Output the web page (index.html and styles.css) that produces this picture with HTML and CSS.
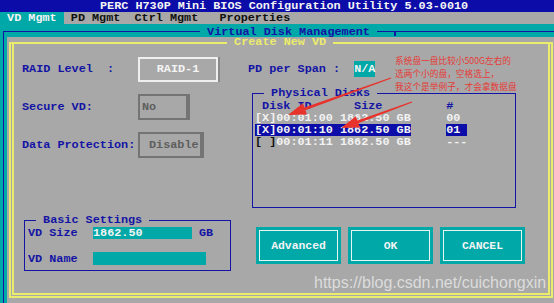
FILE: index.html
```html
<!DOCTYPE html>
<html>
<head>
  <link rel="stylesheet" href="styles.css">
</head>
<body>
  <div class="titlebar">PERC H730P Mini BIOS Configuration Utility 5.03-0010</div>

  <div class="tabs">
    <span class="tab active">VD Mgmt</span>
    <span class="tab">PD Mgmt</span>
    <span class="tab">Ctrl Mgmt</span>
    <span class="tab last">Properties</span>
  </div>

  <div class="main">
    <div class="frame">
      <span class="frame-title">Virtual Disk Management</span>
      <div class="dialog">
        <div class="outer">
          <span class="dialog-title">Create New VD</span>
          <div class="inner">

            <div class="top">
              <div class="options">
                <div class="opt-row">
                  <span class="label">RAID Level  :</span>
                  <span class="box box-raid">RAID-1</span>
                </div>
                <div class="opt-row">
                  <span class="label">Secure VD:</span>
                  <span class="box box-off box-no">No</span>
                </div>
                <div class="opt-row">
                  <span class="label">Data Protection:</span>
                  <span class="box box-off box-dis">Disable</span>
                </div>
              </div>

              <div class="disks-col">
                <div class="span-row">
                  <span class="label">PD per Span :  </span><span class="na">N/A</span>
                </div>
                <fieldset class="group disks">
                  <legend>Physical Disks</legend>
                  <div class="disk-row head">
                    <span class="h-id">Disk ID</span><span class="h-size">Size</span><span class="h-num">#</span>
                  </div>
                  <div class="disk-row">
                    <span class="id">[X]00:01:00 1862.50 GB</span><span class="num">00</span>
                  </div>
                  <div class="disk-row selected">
                    <span class="id">[X]00:01:10 1862.50 GB</span><span class="num">01</span>
                  </div>
                  <div class="disk-row">
                    <span class="id"><span class="mark">[ ]</span>00:01:11 1862.50 GB</span><span class="num">---</span>
                  </div>
                </fieldset>
              </div>
            </div>

            <div class="bottom">
              <fieldset class="group basic">
                <legend>Basic Settings</legend>
                <div class="set-row">
                  <span class="set-label">VD Size</span>
                  <span class="input input-size">1862.50</span>
                  <span class="unit">GB</span>
                </div>
                <div class="set-row">
                  <span class="set-label">VD Name</span>
                  <span class="input input-name"></span>
                </div>
              </fieldset>

              <div class="actions">
                <div class="btn"><span>Advanced</span></div>
                <div class="btn"><span>OK</span></div>
                <div class="btn"><span>CANCEL</span></div>
              </div>
            </div>

          </div>
        </div>
      </div>
    </div>
  </div>

  <div class="note">
    系统盘一盘比较小500G左右的<br>
    选两个小的盘，空格选上，<br>
    我这个是举例子，才会拿数据盘
  </div>

  <svg class="arrows" width="554" height="303" viewBox="0 0 554 303">
    <polygon points="390.8,77.5 304.4,107.5 302.9,103.3 288,115 306.9,114.6 305.4,110.3 391.2,78.5"/>
    <polygon points="411.8,101.5 357.4,120.4 355.8,116.2 341,128 360,127.4 358.4,123.2 412.2,102.5"/>
  </svg>

  <div class="watermark">https://blog.csdn.net/cuichongxin</div>
</body>
</html>
```

FILE: styles.css
```css
* {
  margin: 0;
  padding: 0;
  box-sizing: border-box;
}

body {
  width: 554px;
  height: 303px;
  overflow: hidden;
  position: relative;
  display: flex;
  flex-direction: column;
  background: #00a8a8;
  font-family: "Liberation Mono", "DejaVu Sans Mono", monospace;
  font-size: 11.8px;
  font-weight: bold;
  line-height: 12px;
  color: #1414a4;
}

.titlebar {
  height: 12px;
  line-height: 12px;
  padding-left: 100px;
  background: #0c0ca8;
  color: #f4f4f4;
  white-space: pre;
}

.tabs {
  height: 12px;
  display: flex;
  background: #a8a8a8;
  color: #101010;
}

.tab {
  padding: 0 1ch;
}

.tab.active {
  background: #00a8a8;
  color: #f4f4f4;
}

.tab.last {
  margin-left: 1ch;
}

.main {
  flex: 1;
  display: flex;
  flex-direction: column;
  padding: 7px 0 0 3px;
}

.frame {
  flex: 1;
  display: flex;
  flex-direction: column;
  position: relative;
  border-top: 1px solid #1414a4;
  border-left: 1px solid #1414a4;
  padding: 5px 0 0 3px;
}

.frame::after {
  content: '';
  position: absolute;
  left: 390px;
  top: 0;
  width: 2px;
  height: 4px;
  background: #1414a4;
}

.frame-title {
  position: absolute;
  left: 196px;
  top: -5px;
  line-height: 10px;
  padding: 0 1ch;
  background: #00a8a8;
  white-space: pre;
}

.dialog {
  flex: 1;
  display: flex;
  flex-direction: column;
  background: #a8a8a8;
  padding: 5px 1px 5px 2px;
}

.outer {
  flex: 1;
  display: flex;
  flex-direction: column;
  position: relative;
  border: 2px solid #ecec6c;
  padding: 0 1px 1px 1px;
}

.dialog-title {
  position: absolute;
  left: 216px;
  top: -7px;
  line-height: 10px;
  padding: 0 1ch;
  background: #a8a8a8;
  color: #ecec6c;
}

.inner {
  flex: 1;
  border: 2px solid #ecec6c;
  border-top: none;
}

/* upper part */

.top {
  display: flex;
}

.options {
  width: 234px;
  padding: 12px 0 0 8px;
  display: flex;
  flex-direction: column;
  gap: 12px;
}

.opt-row {
  height: 26px;
  display: flex;
  align-items: center;
}

.label {
  white-space: pre;
}

.opt-row .label {
  width: 116px;
}

.box {
  height: 26px;
  display: flex;
  align-items: center;
}

.box-raid {
  width: 80px;
  height: 25px;
  justify-content: center;
  color: #f4f4f4;
  border: 2px solid #efefef;
  box-shadow: 2px 0 0 #8a8a8a;
}

.box-off {
  color: #5e5e5e;
  border: 2px solid #747474;
  border-right-width: 4px;
  padding-left: 2px;
}

.box-no {
  width: 52px;
}

.box-dis {
  width: 66px;
  padding-left: 9px;
}

.disks-col {
  display: flex;
  flex-direction: column;
}

.span-row {
  height: 26px;
  margin-top: 12px;
  display: flex;
  align-items: center;
}

.na {
  background: #00a8a8;
  color: #f4f4f4;
  padding: 2px 0;
}

.group {
  border: 1px solid #1414a4;
  min-width: 0;
}

.group legend {
  padding: 0 1ch;
  white-space: pre;
}

.disks {
  width: 264px;
  height: 121px;
  margin: 5px 0 0 4px;
  padding: 1px 0 0 2px;
}

.disks legend {
  margin-left: 9px;
}

.disk-row {
  display: flex;
  white-space: pre;
  color: #f2f2f2;
}

.disk-row.head {
  color: #1414a4;
}

.h-id {
  width: 14ch;
  padding-left: 1ch;
}

.h-size {
  width: 13ch;
}

.id {
  width: 22ch;
  margin-right: 5ch;
}

.num {
  width: 3ch;
}

.selected .id,
.selected .num {
  background: #0c0ca8;
}

.mark {
  color: #101010;
}

/* lower part */

.bottom {
  display: flex;
  align-items: flex-start;
  margin-top: 6px;
}

.basic {
  width: 207px;
  height: 57px;
  margin-left: 10px;
  padding: 1px 0 0 3px;
}

.basic legend {
  margin-left: 8px;
}

.set-row {
  display: flex;
  align-items: center;
  height: 12px;
}

.set-row + .set-row {
  margin-top: 13px;
  height: 13px;
}

.set-label {
  width: 65px;
}

.input {
  height: 100%;
  background: #00a8a8;
  color: #f4f4f4;
}

.input-size {
  width: 99px;
}

.input-name {
  width: 113px;
}

.unit {
  margin-left: 7px;
}

.actions {
  display: flex;
  gap: 7px;
  margin: 13px 0 0 25px;
}

.btn {
  width: 85px;
  height: 37px;
  padding: 3px;
  background: #00a8a8;
}

.btn span {
  height: 100%;
  display: flex;
  align-items: center;
  justify-content: center;
  border: 1px solid #e6f6f6;
  color: #f4f4f4;
  font-size: 11.4px;
}

/* screenshot annotations */

.note {
  position: absolute;
  left: 395px;
  top: 54px;
  font-family: "Noto Sans CJK SC", sans-serif;
  font-weight: normal;
  font-size: 8.7px;
  line-height: 13px;
  color: #e63a36;
}

.arrows {
  position: absolute;
  left: 0;
  top: 0;
  fill: #e8322c;
  pointer-events: none;
}

.watermark {
  position: absolute;
  left: 314px;
  top: 274px;
  font-family: "Liberation Sans", Arial, sans-serif;
  font-weight: normal;
  font-size: 16px;
  line-height: 18px;
  color: #dcdcdc;
}
```
